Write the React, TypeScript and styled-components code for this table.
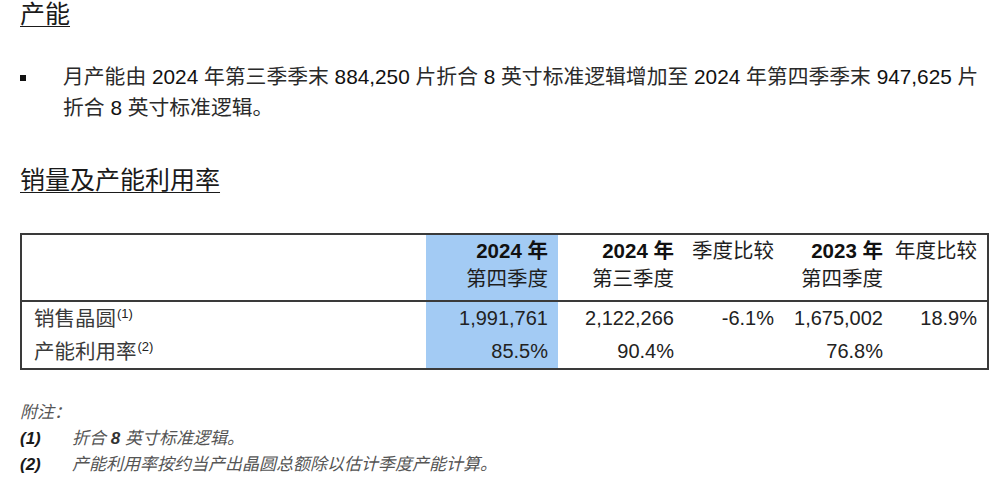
import React from "react";
import styled, { createGlobalStyle } from "styled-components";

const Global = createGlobalStyle`
  html, body { margin: 0; padding: 0; background: #ffffff; }
  body {
    font-family: "Liberation Sans", "Noto Sans CJK SC", sans-serif;
    color: #1c1c1c;
  }
`;

const Page = styled.div`
  width: 994px;
  height: 493px;
  box-sizing: border-box;
  padding: 0 7px 0 20px;
  overflow: hidden;
`;

const SectionTitle = styled.h2<{ $top: number }>`
  margin: ${(p) => p.$top}px 0 0 0;
  font-size: 25px;
  line-height: 28px;
  font-weight: 400;
  text-decoration: underline;
  text-underline-offset: 3px;
  text-decoration-thickness: 1px;
  color: #1a1a1a;
`;

const BulletRow = styled.div`
  display: flex;
  margin-top: 33px;
`;

const BulletMark = styled.div`
  width: 43px;
  flex: none;
  display: flex;
  padding-top: 14px;
  &::before {
    content: "";
    width: 6px;
    height: 6px;
    background: #111;
  }
`;

const BulletText = styled.p`
  margin: 0;
  font-size: 20.8px;
  line-height: 31px;
  color: #2a2a2a;
  white-space: nowrap;
`;

const Num = styled.span`
  color: #111;
`;

const Table = styled.table`
  margin-top: 39px;
  border-collapse: collapse;
  border: 2px solid #3a3a3a;
  width: 967px;
  table-layout: fixed;
  font-size: 20px;
`;

const HeadCell = styled.th<{ $blue?: boolean; $w: number }>`
  box-sizing: border-box;
  width: ${(p) => p.$w}px;
  text-align: right;
  vertical-align: top;
  font-weight: 400;
  font-size: 20.5px;
  padding: 2px 10px 7px 0;
  line-height: 28px;
  background: ${(p) => (p.$blue ? "#a3cbf4" : "transparent")};
  border-bottom: 2px solid #3a3a3a;
  color: #1e1e1e;
  white-space: nowrap;
`;

const Bold = styled.span`
  font-weight: 700;
  display: block;
  color: #111;
`;

const Line = styled.span`
  display: block;
`;

const Cell = styled.td<{ $blue?: boolean; $left?: boolean }>`
  box-sizing: border-box;
  text-align: ${(p) => (p.$left ? "left" : "right")};
  padding: 0 10px 0 ${(p) => (p.$left ? "12px" : "0")};
  height: 33px;
  line-height: 33px;
  font-size: ${(p) => (p.$left ? "20.5px" : "20px")};
  background: ${(p) => (p.$blue ? "#a3cbf4" : "transparent")};
  color: ${(p) => (p.$left ? "#3a3a3a" : "#222")};
  white-space: nowrap;
`;

const Sup = styled.sup`
  font-size: 13px;
  vertical-align: 8px;
  line-height: 0;
  color: #222;
  margin-left: 1px;
`;

const Notes = styled.div`
  margin-top: 30px;
  font-style: italic;
  font-size: 17px;
  line-height: 26px;
  color: #555;
`;

const NoteRow = styled.div`
  display: flex;
`;

const NoteNum = styled.span`
  width: 52px;
  flex: none;
  color: #1a1a1a;
  font-weight: 700;
`;

const NoteDigit = styled.b`
  color: #333;
`;

export default function App() {
  return (
    <>
      <Global />
      <Page>
        <SectionTitle $top={0}>产能</SectionTitle>
        <BulletRow>
          <BulletMark />
          <BulletText>
            月产能由 <Num>2024</Num> 年第三季季末 <Num>884,250</Num> 片折合 <Num>8</Num> 英寸标准逻辑增加至{" "}
            <Num>2024</Num> 年第四季季末 <Num>947,625</Num> 片
            <br />
            折合 <Num>8</Num> 英寸标准逻辑。
          </BulletText>
        </BulletRow>
        <SectionTitle $top={43}>销量及产能利用率</SectionTitle>
        <Table>
          <thead>
            <tr>
              <HeadCell $w={405} />
              <HeadCell $w={132} $blue>
                <Bold>2024 年</Bold>
                <Line>第四季度</Line>
              </HeadCell>
              <HeadCell $w={126}>
                <Bold>2024 年</Bold>
                <Line>第三季度</Line>
              </HeadCell>
              <HeadCell $w={100}>
                <Line>季度比较</Line>
              </HeadCell>
              <HeadCell $w={109}>
                <Bold>2023 年</Bold>
                <Line>第四季度</Line>
              </HeadCell>
              <HeadCell $w={95}>
                <Line>年度比较</Line>
              </HeadCell>
            </tr>
          </thead>
          <tbody>
            <tr>
              <Cell $left>
                销售晶圆<Sup>(1)</Sup>
              </Cell>
              <Cell $blue>1,991,761</Cell>
              <Cell>2,122,266</Cell>
              <Cell>-6.1%</Cell>
              <Cell>1,675,002</Cell>
              <Cell>18.9%</Cell>
            </tr>
            <tr>
              <Cell $left>
                产能利用率<Sup>(2)</Sup>
              </Cell>
              <Cell $blue>85.5%</Cell>
              <Cell>90.4%</Cell>
              <Cell />
              <Cell>76.8%</Cell>
              <Cell />
            </tr>
          </tbody>
        </Table>
        <Notes>
          <div>附注：</div>
          <NoteRow>
            <NoteNum>(1)</NoteNum>
            <span>
              折合 <NoteDigit>8</NoteDigit> 英寸标准逻辑。
            </span>
          </NoteRow>
          <NoteRow>
            <NoteNum>(2)</NoteNum>
            <span>产能利用率按约当产出晶圆总额除以估计季度产能计算。</span>
          </NoteRow>
        </Notes>
      </Page>
    </>
  );
}
